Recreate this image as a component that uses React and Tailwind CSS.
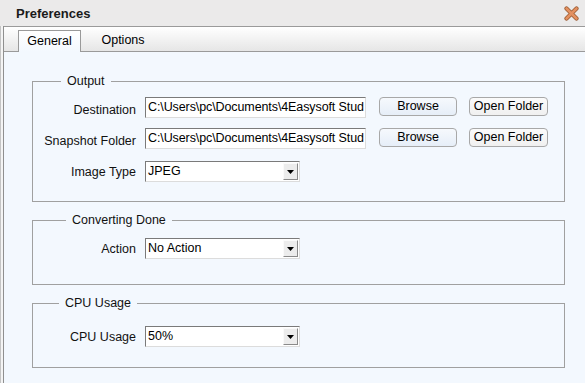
import React from 'react';

const font = { fontFamily: '"Liberation Sans", Arial, sans-serif' };

const PATH = 'C:\\Users\\pc\\Documents\\4Easysoft Stud';

const TextBox = ({ value }) => (
  <div className="w-[221px] h-[21px] bg-white border border-t-[#7a7a7a] border-l-[#7a7a7a] border-b-[#dcdcdc] border-r-[#dcdcdc] overflow-hidden whitespace-nowrap flex items-center pl-[2px] text-[12.5px] tracking-[-0.1px] text-black">
    {value}
  </div>
);

const Select = ({ value }) => (
  <div className="w-[155px] h-[21px] bg-white border border-t-[#7a7a7a] border-l-[#7a7a7a] border-b-[#dcdcdc] border-r-[#dcdcdc] flex items-center text-[12.5px] text-black">
    <span className="flex-1 pl-[2px]">{value}</span>
    <div className="w-[15px] h-[17px] mr-[1px] bg-[#ececec] border border-t-[#fafafa] border-l-[#fafafa] border-b-[#8a8a8a] border-r-[#8a8a8a] flex items-center justify-center">
      <svg width="7" height="4" viewBox="0 0 7 4">
        <path d="M0 0h7L3.5 4z" fill="#000" />
      </svg>
    </div>
  </div>
);

const Button = ({ children, light }) => (
  <button
    type="button"
    className={`h-[19px] rounded-[4px] border border-[#a8a8a8] text-[12.5px] leading-[15px] text-black flex items-center justify-center ${
      light ? 'w-[79px] bg-gradient-to-b from-[#fbfbfb] to-[#f0f0f0]' : 'w-[78px] bg-gradient-to-b from-[#f6f9fd] to-[#e6eef8]'
    }`}
  >
    {children}
  </button>
);

const Row = ({ label, low, children }) => (
  <div className="flex items-start h-[21px]">
    <div className={`w-[103px] text-right text-[12.5px] leading-[14px] text-[#111] ${low ? 'pt-[6px]' : 'pt-[4px]'}`}>{label}</div>
    <div className="ml-[9px] flex items-start">{children}</div>
  </div>
);

const Group = ({ title, offset, className, children }) => (
  <div className={`relative border border-[#a0a0a0] ${className}`}>
    <span
      className={`absolute -top-[8px] ${offset} px-[6px] bg-[#f3f8fe] text-[12.5px] text-[#111] leading-[14px]`}
    >
      {title}
    </span>
    {children}
  </div>
);

export default function App() {
  return (
    <div className="w-[585px] h-[383px] overflow-hidden bg-[#ebeaea] flex flex-col" style={font}>
      {/* Title bar */}
      <div className="h-[26px] shrink-0 flex items-center justify-between pl-[16px] pr-[6px]">
        <span className="text-[13px] font-bold text-[#1a1a1a] mt-[1px]">Preferences</span>
        <svg width="15" height="15" viewBox="0 0 15 15">
          <path d="M2.5 2.5L12.5 12.5M12.5 2.5L2.5 12.5" stroke="#9a5a30" strokeWidth="4.2" strokeLinecap="round" />
          <path d="M2.5 2.5L12.5 12.5M12.5 2.5L2.5 12.5" stroke="#e39060" strokeWidth="2.6" strokeLinecap="round" />
        </svg>
      </div>

      <div className="flex-1 flex border-l border-[#c4c4c4] bg-[#f4f4f4] pl-[2px]">
        <div className="flex-1 flex flex-col border-l border-[#8f8f8f]">
          {/* Tabs */}
          <div className="h-[26px] shrink-0 border-t border-b border-[#9a9a9a] bg-gradient-to-b from-[#ffffff] to-[#e6e6e6] flex items-end pl-[14px]">
            <div className="h-[22px] -mb-[1px] w-[63px] border border-b-0 border-[#9a9a9a] bg-gradient-to-b from-[#ffffff] to-[#f3f8fe] flex items-center justify-center text-[12.5px] text-black">
              General
            </div>
            <div className="h-[22px] w-[66px] ml-[9px] flex items-center justify-center text-[12.5px] text-black">
              Options
            </div>
          </div>

          {/* Content */}
          <div className="flex-1 bg-[#f3f8fe] pl-[28px] pr-[20px] pt-[29px]">
            <Group title="Output" offset="left-[28px]" className="h-[121px] pt-[15px]">
              <div className="flex flex-col gap-[10px]">
                <Row label="Destination" low>
                  <TextBox value={PATH} />
                  <div className="ml-[13px] flex gap-[12px]">
                    <Button>Browse</Button>
                    <Button light>Open Folder</Button>
                  </div>
                </Row>
                <Row label="Snapshot Folder" low>
                  <TextBox value={PATH} />
                  <div className="ml-[13px] flex gap-[12px]">
                    <Button>Browse</Button>
                    <Button light>Open Folder</Button>
                  </div>
                </Row>
                <div className="mt-[2px]">
                  <Row label="Image Type">
                    <Select value="JPEG" />
                  </Row>
                </div>
              </div>
            </Group>

            <Group title="Converting Done" offset="left-[33px]" className="h-[65px] mt-[18px] pt-[17px]">
              <Row label="Action">
                <Select value="No Action" />
              </Row>
            </Group>

            <Group title="CPU Usage" offset="left-[26px]" className="h-[65px] mt-[18px] pt-[22px]">
              <Row label="CPU Usage">
                <Select value="50%" />
              </Row>
            </Group>
          </div>
        </div>
      </div>
    </div>
  );
}
